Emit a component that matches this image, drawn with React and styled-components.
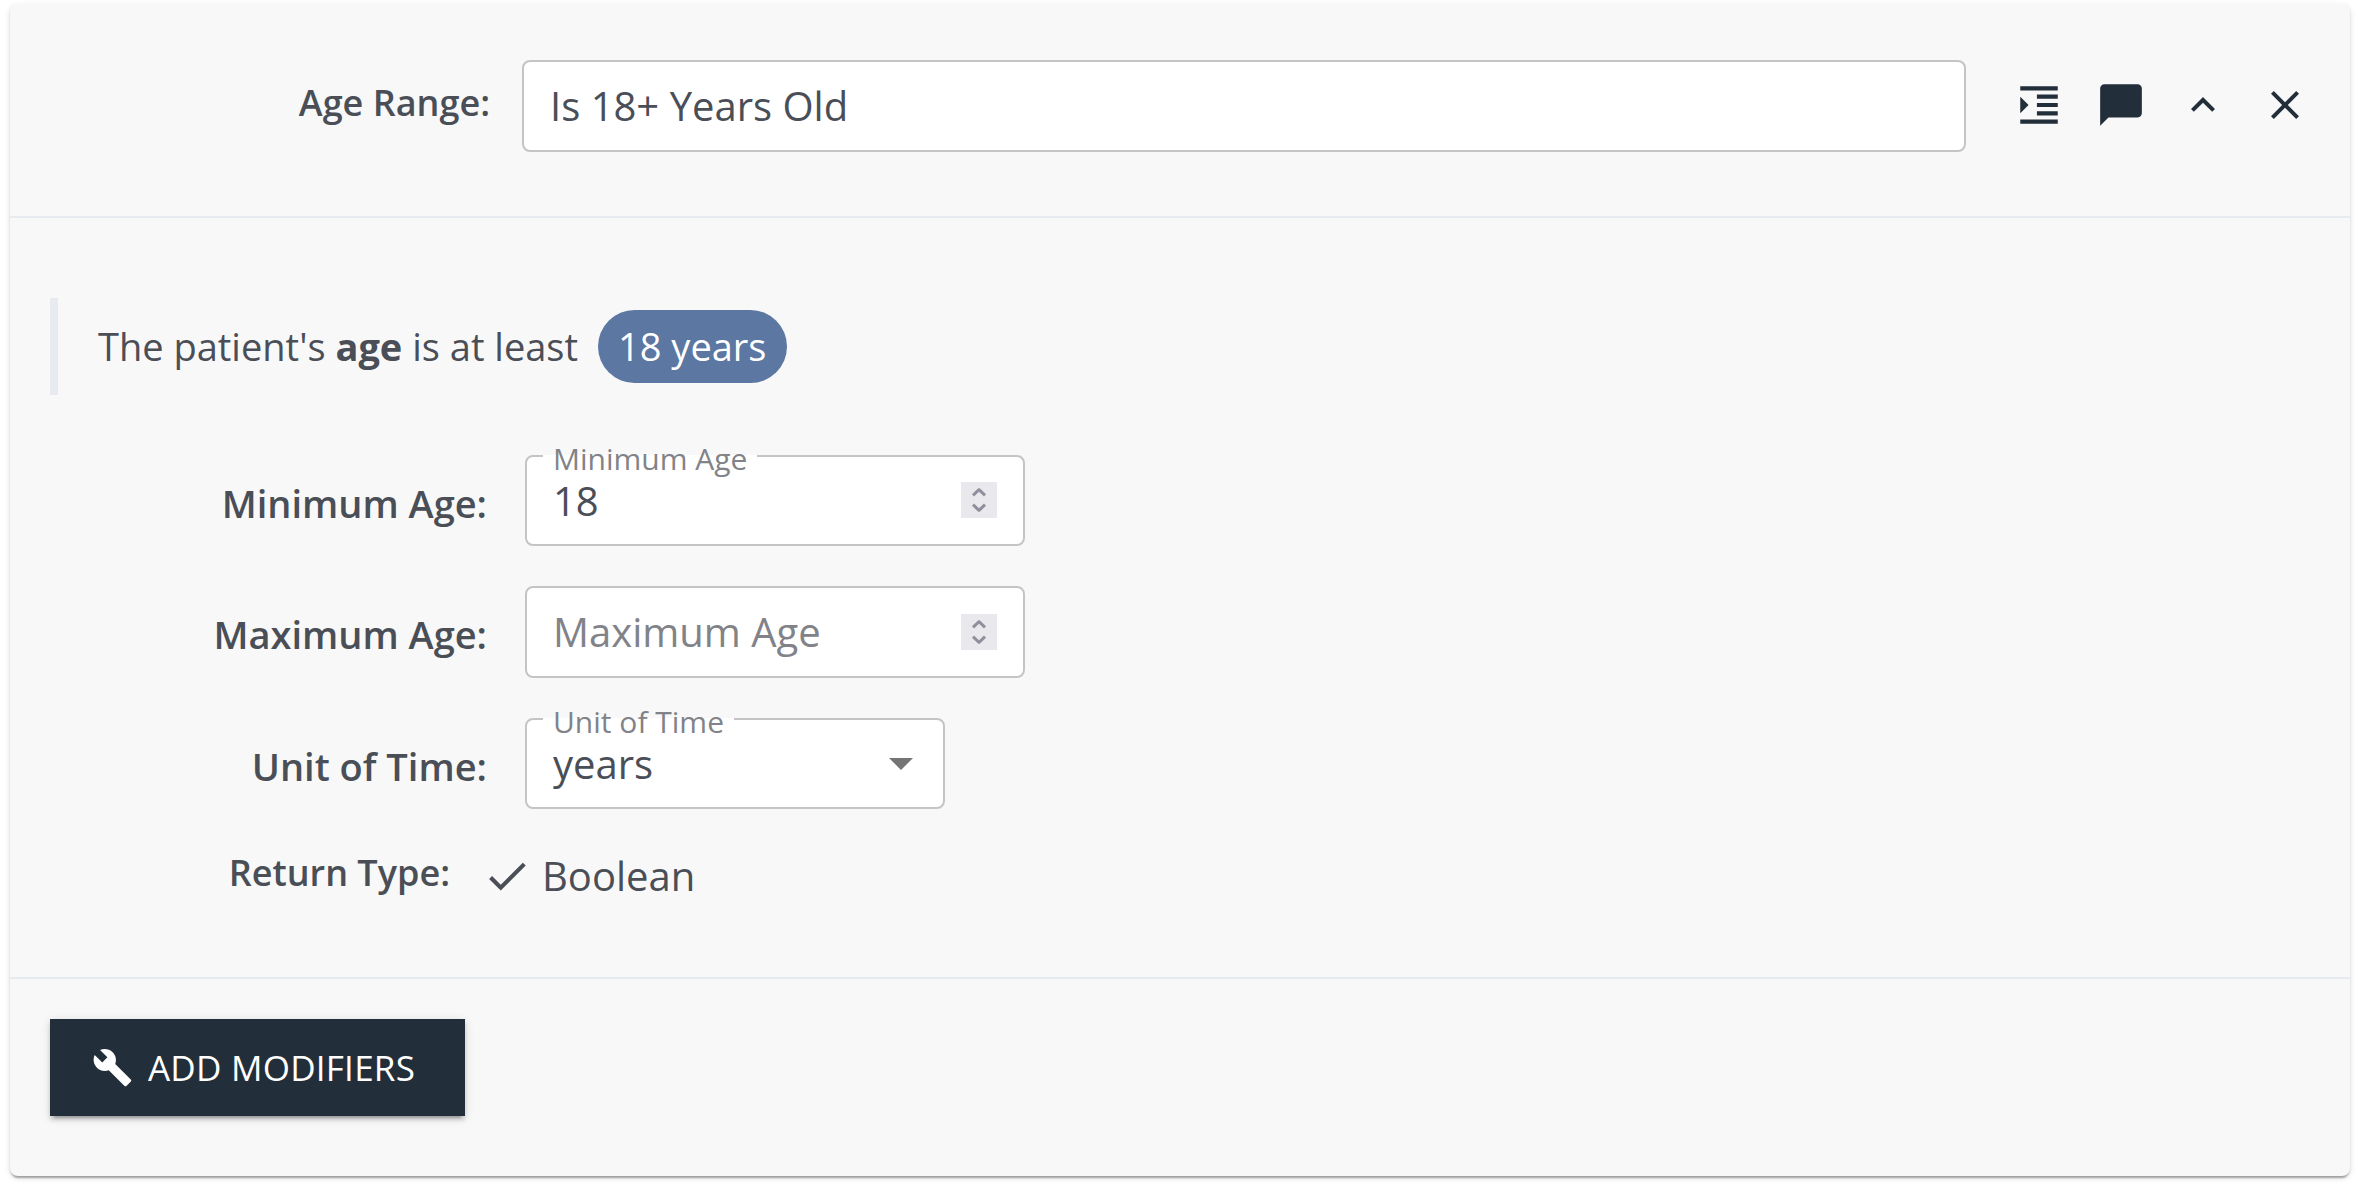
import React, { useState } from 'react';
import styled, { createGlobalStyle } from 'styled-components';

const colors = {
  text: '#4a4e57',
  muted: '#818388',
  navy: '#222e3a',
  panel: '#f8f8f8',
  rule: '#e7ebef',
  outline: '#c4c4c4',
  pill: '#5b77a2',
};

const GlobalStyle = createGlobalStyle`
  *, *::before, *::after { box-sizing: border-box; }
  body {
    margin: 0;
    background: #fff;
    color: ${colors.text};
    font-family: "Open Sans", "Noto Sans", sans-serif;
    font-size: 40px;
  }
  button, input { font-family: inherit; color: inherit; margin: 0; }
`;

const Page = styled.main`
  padding: 4px 12px 14px 10px;
`;

const Card = styled.section`
  display: flex;
  flex-direction: column;
  height: 1172px;
  border-radius: 8px;
  background: ${colors.panel};
  box-shadow: 0 4px 2px -2px rgba(0, 0, 0, 0.2), 0 2px 2px rgba(0, 0, 0, 0.14),
    0 2px 6px rgba(0, 0, 0, 0.12);
`;

const Header = styled.header`
  display: flex;
  align-items: flex-start;
  height: 214px;
  padding: 56px 24px 0 0;
  border-bottom: 2px solid ${colors.rule};
`;

const Label = styled.label`
  flex: none;
  width: ${(p) => p.$width}px;
  text-align: right;
  font-size: ${(p) => p.$size || 38}px;
  font-weight: 600;
  line-height: ${(p) => p.$line}px;
  white-space: nowrap;
`;

const NameInput = styled.input`
  flex: 1;
  min-width: 0;
  height: 92px;
  margin-left: 32px;
  padding: 0 26px 2px;
  border: 2px solid ${colors.outline};
  border-radius: 8px;
  background: #fff;
  font-size: 40px;
  outline: none;
`;

const Actions = styled.div`
  display: flex;
  margin: 4px 0 0 32px;
`;

const IconButton = styled.button`
  display: flex;
  align-items: center;
  justify-content: center;
  width: 82px;
  height: 82px;
  padding: 0;
  border: 0;
  background: none;
  color: ${colors.navy};
  cursor: pointer;
`;

const Icon = styled.svg`
  display: block;
  flex: none;
  width: ${(p) => p.$size}px;
  height: ${(p) => p.$size}px;
  fill: currentColor;
`;

const Body = styled.div`
  flex: 1;
  padding: 80px 40px 0;
`;

const Summary = styled.div`
  display: flex;
  align-items: center;
  height: 97px;
  padding-left: 40px;
  border-left: 8px solid ${colors.rule};
  font-size: 38px;
  line-height: 52px;
  white-space: pre;
`;

const Sentence = styled.span`
  padding-bottom: 1px;
`;

const Pill = styled.span`
  display: flex;
  align-items: center;
  height: 73px;
  margin-left: 20px;
  padding: 0 21px 1px 20px;
  border-radius: 37px;
  background: ${colors.pill};
  color: #fff;
`;

const Form = styled.div`
  display: flex;
  flex-direction: column;
  gap: 40px;
  padding-top: 59.8px;
`;

const Row = styled.div`
  display: flex;
  align-items: flex-start;
  height: 91.5px;
`;

const Field = styled.div`
  position: relative;
  display: flex;
  align-items: center;
  width: ${(p) => p.$width}px;
  height: 91.4px;
  margin-left: 38px;
  padding: 0 26px;
  border: 2px solid ${colors.outline};
  border-radius: 8px;
  background: #fff;
`;

const FloatingLabel = styled.span`
  position: absolute;
  top: -2px;
  left: 16px;
  width: ${(p) => p.$width}px;
  height: 2px;
  padding-left: 10px;
  background: #fff;
  color: ${colors.muted};
  font-size: 30px;
  line-height: 8px;
  white-space: nowrap;
`;

const FieldInput = styled.input`
  flex: 1;
  min-width: 0;
  height: 56px;
  padding: 0;
  border: 0;
  background: none;
  font-size: 40px;
  outline: none;
  &::placeholder { color: ${colors.muted}; opacity: 1; }
`;

const Stepper = styled.span`
  display: flex;
  align-items: center;
  justify-content: center;
  width: 36px;
  height: 36px;
  background: #e9e9ed;
  color: #8f8f9d;
`;

const SelectValue = styled.span`
  flex: 1;
  padding-top: 1px;
  line-height: 56px;
`;

const SelectArrow = styled.span`
  border: 12px solid transparent;
  border-top-color: #757575;
  border-bottom: 0;
  margin: 1px 4px 0 0;
`;

const ReturnType = styled.div`
  display: flex;
  align-items: flex-start;
  line-height: 54px;
`;

const ReturnValue = styled.span`
  display: flex;
  align-items: center;
  gap: 10px;
  height: 53px;
  margin-left: 32px;
`;

const Footer = styled.footer`
  height: 199px;
  padding: 40px;
  border-top: 2px solid ${colors.rule};
`;

const ModifierButton = styled.button`
  display: flex;
  align-items: center;
  gap: 15px;
  width: 415px;
  height: 97px;
  padding: 0 0 0 42px;
  border: 0;
  background: ${colors.navy};
  color: #fff;
  font-size: 35px;
  letter-spacing: 0.24px;
  white-space: nowrap;
  box-shadow: 0 6px 2px -4px rgba(0, 0, 0, 0.2), 0 4px 4px rgba(0, 0, 0, 0.14),
    0 2px 10px rgba(0, 0, 0, 0.12);
  cursor: pointer;
`;

const icons = {
  indent: 'M3 21h18v-2H3v2zM3 8v8l4-4-4-4zm8 9h10v-2H11v2zM3 3v2h18V3H3zm8 6h10V7H11v2zm0 4h10v-2H11v2z',
  comment: 'M22 4c0-1.1-.9-2-2-2H4c-1.1 0-2 .9-2 2v18l4-4h14c1.1 0 2-.9 2-2V4z',
  up: 'M12 8l-6 6 1.41 1.41L12 10.83l4.59 4.58L18 14z',
  close: 'M19 6.41L17.59 5 12 10.59 6.41 5 5 6.41 10.59 12 5 17.59 6.41 19 12 13.41 17.59 19 19 17.59 13.41 12z',
  check: 'M9 16.17L4.83 12l-1.42 1.41L9 19 21 7l-1.41-1.41z',
  build: 'M22.7 19l-9.1-9.1c.9-2.3.4-5-1.5-6.9-2-2-5-2.4-7.4-1.3L9 6 6 9 1.6 4.7C.4 7.1.9 10.1 2.9 12.1c1.9 1.9 4.6 2.4 6.9 1.5l9.1 9.1c.4.4 1 .4 1.4 0l2.3-2.3c.5-.4.5-1.1.1-1.4z',
};

function Glyph({ name, size }) {
  return (
    <Icon $size={size} viewBox="0 0 24 24" aria-hidden="true">
      <path d={icons[name]} />
    </Icon>
  );
}

function Spinner() {
  return (
    <Stepper>
      <svg width="36" height="36" viewBox="0 0 36 36" fill="none" stroke="currentColor" strokeWidth="3" strokeLinejoin="round">
        <path d="M12 13.3l6-5.6 6 5.6M12 22.7l6 5.6 6-5.6" />
      </svg>
    </Stepper>
  );
}

export default function App() {
  const [name, setName] = useState('Is 18+ Years Old');
  const [min, setMin] = useState('18');
  const [max, setMax] = useState('');

  return (
    <>
      <GlobalStyle />
      <Page>
        <Card>
          <Header>
            <Label $width={480} $size={36} $line={86}>Age Range:</Label>
            <NameInput value={name} onChange={(e) => setName(e.target.value)} />
            <Actions>
              <IconButton aria-label="indent"><Glyph name="indent" size={50} /></IconButton>
              <IconButton aria-label="comment"><Glyph name="comment" size={50} /></IconButton>
              <IconButton aria-label="collapse"><Glyph name="up" size={48} /></IconButton>
              <IconButton aria-label="delete"><Glyph name="close" size={48} /></IconButton>
            </Actions>
          </Header>
          <Body>
            <Summary>
              <Sentence>The patient's <b>age</b> is at least</Sentence>
              <Pill>18 years</Pill>
            </Summary>
            <Form>
              <Row>
                <Label $width={437} $line={96}>Minimum Age:</Label>
                <Field $width={500}>
                  <FloatingLabel $width={214}>Minimum Age</FloatingLabel>
                  <FieldInput value={min} onChange={(e) => setMin(e.target.value)} />
                  <Spinner />
                </Field>
              </Row>
              <Row>
                <Label $width={437} $line={96}>Maximum Age:</Label>
                <Field $width={500}>
                  <FieldInput placeholder="Maximum Age" value={max} onChange={(e) => setMax(e.target.value)} />
                  <Spinner />
                </Field>
              </Row>
              <Row>
                <Label $width={437} $line={96}>Unit of Time:</Label>
                <Field $width={420}>
                  <FloatingLabel $width={191}>Unit of Time</FloatingLabel>
                  <SelectValue>years</SelectValue>
                  <SelectArrow />
                </Field>
              </Row>
              <ReturnType>
                <Label as="span" $width={400} $size={36} $line={48}>Return Type:</Label>
                <ReturnValue><Glyph name="check" size={50} />Boolean</ReturnValue>
              </ReturnType>
            </Form>
          </Body>
          <Footer>
            <ModifierButton><Glyph name="build" size={41} />ADD MODIFIERS</ModifierButton>
          </Footer>
        </Card>
      </Page>
    </>
  );
}
